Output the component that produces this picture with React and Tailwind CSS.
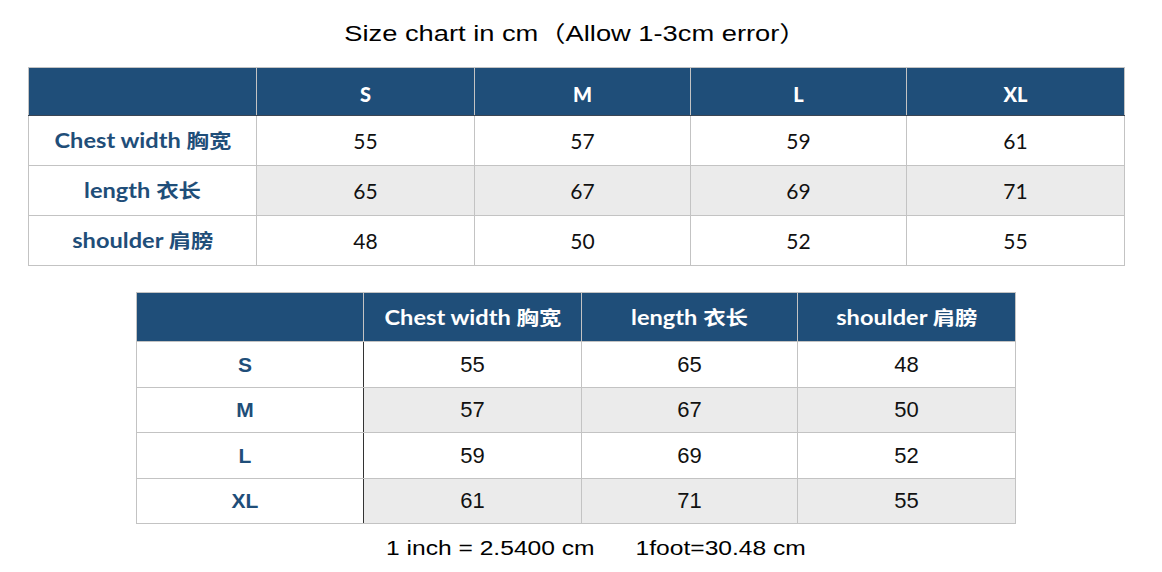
import React from "react";

const blue = "bg-[#1f4e79]";

const t1 = [
  { label: "Chest width", zh: "胸宽", vals: ["55", "57", "59", "61"], gray: false },
  { label: "length", zh: "衣长", vals: ["65", "67", "69", "71"], gray: true },
  { label: "shoulder", zh: "肩膀", vals: ["48", "50", "52", "55"], gray: false },
];

const t2 = [
  { size: "S", vals: ["55", "65", "48"], gray: false },
  { size: "M", vals: ["57", "67", "50"], gray: true },
  { size: "L", vals: ["59", "69", "52"], gray: false },
  { size: "XL", vals: ["61", "71", "55"], gray: true },
];

function Label({ en, zh, className }) {
  return (
    <span
      className={
        "inline-block scale-x-[1.18] whitespace-nowrap font-[Lato,'Noto_Sans_CJK_SC',sans-serif] font-bold text-[20px] leading-[26px] " +
        className
      }
    >
      {en} <span className="font-['Noto_Sans_CJK_SC',sans-serif] font-bold text-[19px]">{zh}</span>
    </span>
  );
}

export default function App() {
  return (
    <div className="w-[1162px] h-[572px] bg-white overflow-hidden">
      <div className="pt-[19px] h-[67px] text-center font-['Liberation_Sans','Noto_Sans_CJK_SC',sans-serif] text-[22px] text-black leading-[30px]">
        <span className="inline-block whitespace-nowrap scale-x-[1.24] mr-[12px]">Size chart in cm（Allow 1-3cm error）</span>
      </div>

      <table className="ml-[28px] border-collapse table-fixed w-[1096px]">
        <colgroup>
          <col className="w-[228px]" />
          <col className="w-[218px]" />
          <col className="w-[216px]" />
          <col className="w-[216px]" />
          <col className="w-[218px]" />
        </colgroup>
        <thead>
          <tr className="h-[48px]">
            <th className={`${blue} border border-[#c3c3c3] border-b-[#3b4654]`}></th>
            {["S", "M", "L", "XL"].map((s) => (
              <th
                key={s}
                className={`${blue} border border-[#c3c3c3] border-b-[#3b4654] text-white font-[Lato,sans-serif] font-black text-[20px] pt-[4px]`}
              >
                {s}
              </th>
            ))}
          </tr>
        </thead>
        <tbody>
          {t1.map((r) => (
            <tr key={r.label} className="h-[50px]">
              <td className="border border-[#c3c3c3] text-center bg-white">
                <Label en={r.label} zh={r.zh} className="text-[#1f4e79]" />
              </td>
              {r.vals.map((v, i) => (
                <td
                  key={i}
                  className={`border border-[#c3c3c3] text-center font-[Lato,sans-serif] text-[21px] text-[#111] ${
                    r.gray ? "bg-[#ebebeb]" : "bg-white"
                  }`}
                >
                  {v}
                </td>
              ))}
            </tr>
          ))}
        </tbody>
      </table>

      <table className="ml-[136px] mt-[26px] border-collapse table-fixed w-[879px]">
        <colgroup>
          <col className="w-[227px]" />
          <col className="w-[218px]" />
          <col className="w-[216px]" />
          <col className="w-[218px]" />
        </colgroup>
        <thead>
          <tr className="h-[49px]">
            <th className={`${blue} border border-[#c3c3c3]`}></th>
            {[
              ["Chest width", "胸宽"],
              ["length", "衣长"],
              ["shoulder", "肩膀"],
            ].map(([en, zh]) => (
              <th key={en} className={`${blue} border border-[#c3c3c3] text-center`}>
                <Label en={en} zh={zh} className="text-white" />
              </th>
            ))}
          </tr>
        </thead>
        <tbody>
          {t2.map((r) => (
            <tr key={r.size} className="h-[45.5px]">
              <td className="border border-[#c3c3c3] border-r-[#333] text-center pr-[10px] bg-white text-[#1f4e79] font-['Liberation_Sans',sans-serif] font-bold text-[21px]">
                {r.size}
              </td>
              {r.vals.map((v, i) => (
                <td
                  key={i}
                  className={`border border-[#c3c3c3] text-center font-['Liberation_Sans',sans-serif] text-[22px] text-[#111] ${
                    r.gray ? "bg-[#ebebeb]" : "bg-white"
                  } ${i === 0 ? "border-l-[#333]" : ""}`}
                >
                  {v}
                </td>
              ))}
            </tr>
          ))}
        </tbody>
      </table>

      <div className="mt-[10px] pl-[386px] font-['Liberation_Sans',sans-serif] text-[20px] text-black leading-[28px] whitespace-pre">
        <span className="inline-block origin-left scale-x-[1.23]">{"1 inch = 2.5400 cm      1foot=30.48 cm"}</span>
      </div>
    </div>
  );
}
